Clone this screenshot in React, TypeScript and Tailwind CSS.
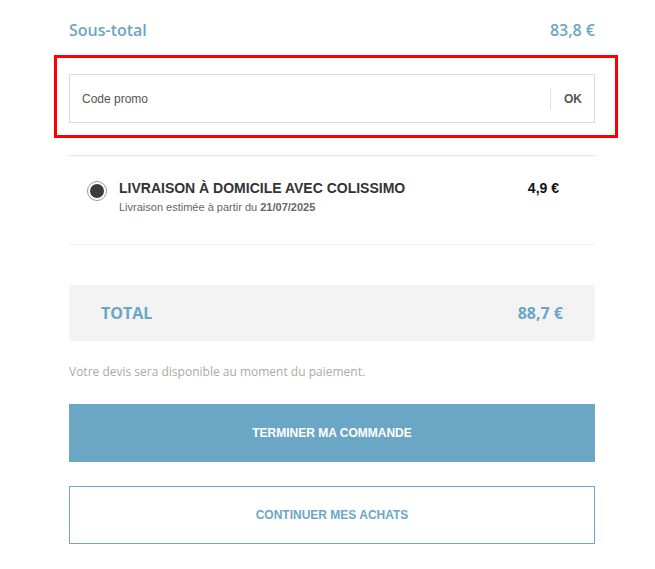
import { useState } from "react";

export default function App() {
  const [code, setCode] = useState("");

  return (
    <main className="min-h-screen bg-white font-['Liberation_Sans',Arial,sans-serif]">
      <div className="w-[526px] pt-[19px] ml-[69px]">
        {/* sous-total */}
        <div className="flex items-center justify-between font-['Open_Sans',sans-serif] text-[16px] font-semibold leading-[22px] text-[#6ba6c5]">
          <span>Sous-total</span>
          <span>83,8 €</span>
        </div>

        {/* code promo */}
        <div className="relative mt-[33px]">
          <div className="pointer-events-none absolute -left-[15px] -right-[23px] -top-[19px] -bottom-[15px] border-[3px] border-[#ff0000]" />
          <div className="flex h-[49px] items-center border border-[#dcdcdc] border-t-[#d7dce3] bg-white">
            <input
              value={code}
              onChange={(e) => setCode(e.target.value)}
              placeholder="Code promo"
              className="h-full flex-1 bg-transparent px-[12px] text-[12px] text-[#333] outline-none placeholder:text-[#555]"
            />
            <div className="h-[22px] w-px bg-[#e2e2e2]" />
            <button className="pl-[13px] pr-[12px] text-[12px] font-bold text-[#555]">OK</button>
          </div>
        </div>

        {/* livraison */}
        <div className="mt-[32px] border-t border-[#e4e4e4]">
          <div className="flex items-start px-[18px] pt-[24px] pb-[30px]">
            <span className="mt-[1px] flex h-[20px] w-[20px] shrink-0 items-center justify-center rounded-full border border-[#9a9a9a] bg-white">
              <span className="h-[14px] w-[14px] rounded-full bg-[#3c3c3c]" />
            </span>
            <div className="ml-[12px] flex-1">
              <p className="text-[14px] font-bold leading-[16px] text-[#333]">
                LIVRAISON À DOMICILE AVEC COLISSIMO
              </p>
              <p className="mt-[5px] text-[11px] leading-[13px] text-[#666]">
                Livraison estimée à partir du <span className="font-bold">21/07/2025</span>
              </p>
            </div>
            <span className="mr-[18px] text-[14px] font-bold leading-[16px] text-[#111]">4,9 €</span>
          </div>
        </div>
        <div className="border-t border-[#f0f0f0]" />

        {/* total */}
        <div className="mt-[40px] flex h-[56px] items-center justify-between bg-[#f3f3f3] px-[32px] font-['Open_Sans',sans-serif] text-[16px] font-bold text-[#6ba6c5]">
          <span>TOTAL</span>
          <span>88,7 €</span>
        </div>

        <p className="mt-[22px] font-['Open_Sans',sans-serif] text-[12px] leading-[18px] text-[#aaaaaa]">
          Votre devis sera disponible au moment du paiement.
        </p>

        <button className="mt-[23px] flex h-[58px] w-full items-center justify-center bg-[#6ba6c5] text-[12px] font-bold text-white">
          TERMINER MA COMMANDE
        </button>

        <button className="mt-[24px] flex h-[58px] w-full items-center justify-center border border-[#6ba6c5] bg-white text-[12px] font-bold text-[#6ba6c5]">
          CONTINUER MES ACHATS
        </button>
      </div>
    </main>
  );
}
